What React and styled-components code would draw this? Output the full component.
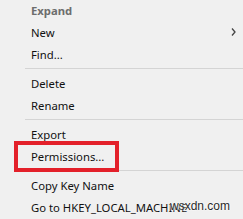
import React from 'react'
import styled, { createGlobalStyle } from 'styled-components'

const GlobalStyle = createGlobalStyle`
  html, body {
    margin: 0;
    padding: 0;
    background: #f0f0f0;
  }
  body {
    font-family: "Segoe UI", "Noto Sans", "Liberation Sans", sans-serif;
  }
`

const Menu = styled.div`
  position: relative;
  width: 243px;
  height: 219px;
  overflow: hidden;
  background: #f0f0f0;
  display: flex;
  flex-direction: column;
  box-sizing: border-box;
`

const List = styled.div`
  display: flex;
  flex-direction: column;
  margin-top: -1px;
`

const Item = styled.div`
  height: 22px;
  display: flex;
  align-items: center;
  justify-content: space-between;
  padding-left: 31px;
  padding-right: 7px;
  font-size: 11.3px;
  color: ${p => (p.$muted ? '#6d6d6d' : '#111')};
  font-weight: ${p => (p.$bold ? 700 : 400)};
  white-space: nowrap;
`

const Separator = styled.div`
  height: 7px;
  display: flex;
  align-items: center;
  padding-left: 25px;
  &::after {
    content: '';
    flex: 1;
    height: 1px;
    background: #d4d4d4;
  }
`

const Chevron = styled.svg`
  width: 5px;
  height: 8px;
`

const Highlight = styled.div`
  position: absolute;
  left: 14px;
  top: 141px;
  width: 105px;
  height: 31px;
  border: 4px solid #e3202a;
  box-sizing: border-box;
`

const Watermark = styled.div`
  position: absolute;
  left: 170px;
  top: 199px;
  font-family: "Liberation Sans", Arial, sans-serif;
  font-size: 12px;
  color: #2a2a2a;
  text-shadow: 0 0 2px #fff, 0 0 2px #fff;
`

const items = [
  { label: 'Expand', bold: true, muted: true },
  { label: 'New', sub: true },
  { label: 'Find...' },
  'sep',
  { label: 'Delete' },
  { label: 'Rename' },
  'sep',
  { label: 'Export' },
  { label: 'Permissions...' },
  'sep',
  { label: 'Copy Key Name' },
  { label: 'Go to HKEY_LOCAL_MACHINE' },
]

export default function App() {
  return (
    <>
      <GlobalStyle />
      <Menu>
        <List>
          {items.map((it, i) =>
            it === 'sep' ? (
              <Separator key={i} />
            ) : (
              <Item key={i} $bold={it.bold} $muted={it.muted}>
                <span>{it.label}</span>
                {it.sub && (
                  <Chevron viewBox="0 0 5 8">
                    <path d="M1 0.5 L4 4 L1 7.5" fill="none" stroke="#444" strokeWidth="1.3" />
                  </Chevron>
                )}
              </Item>
            )
          )}
        </List>
        <Highlight />
        <Watermark>wsxdn.com</Watermark>
      </Menu>
    </>
  )
}
